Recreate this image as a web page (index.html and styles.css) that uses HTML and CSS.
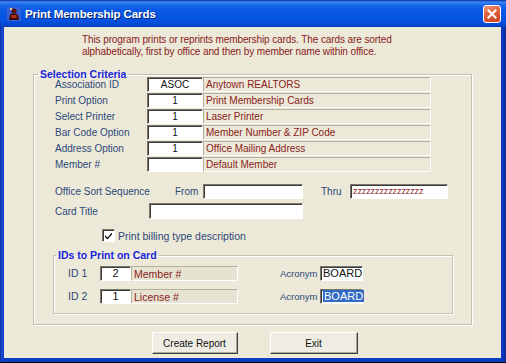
FILE: index.html
```html
<!DOCTYPE html>
<html>
<head>
<meta charset="utf-8">
<title>Print Membership Cards</title>
<link rel="stylesheet" href="styles.css">
</head>
<body>
<div class="window">
  <div class="titlebar">
    <svg class="app-icon" width="14" height="14" viewBox="0 0 14 14">
      <rect x="0" y="0" width="14" height="14" fill="#3A5FD0"/>
      <circle cx="7" cy="4" r="2.6" fill="#5A1010"/>
      <path d="M2 13 L3 7.5 Q7 5.5 11 7.5 L12 13 Z" fill="#3A0A0A"/>
      <path d="M4 8 L10 8 L9.5 11 L4.5 11 Z" fill="#B02A1A"/>
      <rect x="3" y="1" width="2" height="2" fill="#E8D0A0"/>
    </svg>
    <span class="title">Print Membership Cards</span>
    <span class="close">
      <svg width="10" height="10" viewBox="0 0 10 10"><path d="M1.5 1.5 L8.5 8.5 M8.5 1.5 L1.5 8.5" stroke="#fff" stroke-width="2" stroke-linecap="square"/></svg>
    </span>
  </div>
  <div class="client">
    <p class="intro">This program prints or reprints membership cards. The cards are sorted<br>alphabetically, first by office and then by member name within office.</p>
    <fieldset class="group main">
      <legend>Selection Criteria</legend>
      <div class="inner">
        <div class="criteria">
          <div class="row"><span class="lbl">Association ID</span><span class="tb num">ASOC</span><span class="desc">Anytown REALTORS</span></div>
          <div class="row"><span class="lbl">Print Option</span><span class="tb num">1</span><span class="desc">Print Membership Cards</span></div>
          <div class="row"><span class="lbl">Select Printer</span><span class="tb num">1</span><span class="desc">Laser Printer</span></div>
          <div class="row"><span class="lbl">Bar Code Option</span><span class="tb num">1</span><span class="desc">Member Number &amp; ZIP Code</span></div>
          <div class="row"><span class="lbl">Address Option</span><span class="tb num">1</span><span class="desc">Office Mailing Address</span></div>
          <div class="row"><span class="lbl">Member #</span><span class="tb num"></span><span class="desc">Default Member</span></div>
        </div>
        <div class="sort-row">
          <span class="sort-lbl">Office Sort Sequence</span>
          <span class="from-lbl">From</span>
          <span class="tb from"></span>
          <span class="thru-lbl">Thru</span>
          <span class="tb thru">zzzzzzzzzzzzzzzz</span>
        </div>
        <div class="title-row">
          <span class="card-lbl">Card Title</span>
          <span class="tb card"></span>
        </div>
        <div class="check-row">
          <span class="checkbox">
            <svg width="9" height="9" viewBox="0 0 9 9"><path d="M1 4 L3.5 6.5 L8 1.5 L8 3.5 L3.5 8.5 L1 6 Z" fill="#111"/></svg>
          </span>
          <span class="check-lbl">Print billing type description</span>
        </div>
        <fieldset class="group ids">
          <legend>IDs to Print on Card</legend>
          <div class="ids-inner">
            <div class="id-row">
              <span class="id-lbl">ID 1</span>
              <span class="tb idnum">2</span>
              <span class="desc id-desc">Member #</span>
              <span class="acr-lbl">Acronym</span>
              <span class="tb acr">BOARD</span>
            </div>
            <div class="id-row">
              <span class="id-lbl">ID 2</span>
              <span class="tb idnum">1</span>
              <span class="desc id-desc">License #</span>
              <span class="acr-lbl">Acronym</span>
              <span class="tb acr"><span class="sel">BOARD</span></span>
            </div>
          </div>
        </fieldset>
      </div>
    </fieldset>
    <div class="buttons">
      <button class="btn create">Create Report</button>
      <button class="btn exit">Exit</button>
    </div>
  </div>
</div>
</body>
</html>
```

FILE: styles.css
```css
* { box-sizing: border-box; }

html, body {
  margin: 0;
  padding: 0;
  width: 506px;
  height: 363px;
  overflow: hidden;
  background: #0b1a55;
}

body {
  font-family: "Liberation Sans", Arial, sans-serif;
  font-size: 10px;
  color: #2c4878;
}

.window {
  display: flex;
  flex-direction: column;
  width: 506px;
  height: 363px;
  background: linear-gradient(90deg, #0a2a9a 0, #1a4ad8 2px, #0c3cc4 4px, #0c3cc4 501px, #0838c0 503px, #0a2a90 506px);
  border-bottom: 1px solid #000;
}

.titlebar {
  height: 27px;
  flex: none;
  display: flex;
  align-items: center;
  padding: 0 5px 0 7px;
  background: linear-gradient(180deg, #0a2f9e 0, #3d86f5 2px, #1767ea 5px, #0858e4 10px, #0654e2 20px, #0648cf 25px, #0a3fb8 27px);
}

.app-icon {
  flex: none;
  margin-right: 4px;
}

.title {
  flex: 1;
  color: #fff;
  font-family: "Liberation Sans", Arial, sans-serif;
  font-weight: bold;
  font-size: 11.5px;
  letter-spacing: -0.1px;
  text-shadow: 1px 1px 0 #0a2470;
}

.close {
  flex: none;
  width: 18px;
  height: 18px;
  display: flex;
  align-items: center;
  justify-content: center;
  border: 1px solid #fff;
  border-radius: 3px;
  background: linear-gradient(160deg, #f29a78 0, #e26440 40%, #cc4420 100%);
}

.client {
  flex: 1;
  margin: 0 5px 4px 4px;
  background: #ece9d8;
  padding-top: 7px;
}

.intro {
  margin: 0 0 0 78px;
  color: #8a2020;
  font-size: 10px;
  line-height: 12px;
  letter-spacing: -0.1px;
}

.group {
  margin: 0;
  border: 1px solid #c3c0b0;
  box-shadow: inset 1px 1px 0 #fff, 1px 1px 0 #fff;
  min-inline-size: 0;
}

.group > legend {
  color: #1a24d8;
  font-weight: bold;
  font-size: 10.5px;
  line-height: 11px;
  padding: 0 2px;
}

.main {
  margin: 11px 0 0 29px;
  width: 439px;
  padding: 0 0 10px 4px;
}

.inner {
  padding-left: 17px;
}

.criteria {
  margin-top: -3px;
  display: flex;
  flex-direction: column;
}

.row {
  display: flex;
  height: 16px;
  align-items: flex-start;
}

.lbl {
  width: 92px;
  line-height: 15px;
}

.tb {
  background: #fff;
  border: 1px solid;
  border-color: #7a7868 #fff #fff #7a7868;
  box-shadow: inset 1px 1px 0 #3a3a3a;
  color: #111;
  height: 15px;
  line-height: 13px;
  font-size: 10px;
}

.num {
  width: 56px;
  text-align: center;
}

.desc {
  width: 228px;
  height: 15px;
  line-height: 14px;
  padding-left: 2px;
  color: #8a1c1c;
  border: 1px solid;
  border-color: #b3b09e #fff #fff #b3b09e;
}

.sort-row {
  display: flex;
  align-items: center;
  margin-top: 11px;
  height: 15px;
}

.sort-lbl { width: 120px; }
.from-lbl { width: 28px; }
.tb.from { width: 100px; }
.thru-lbl { width: 29px; margin-left: 18px; }

.tb.thru {
  width: 98px;
  color: #8a1c1c;
  font-size: 9px;
  padding-left: 2px;
  letter-spacing: -0.1px;
}

.title-row {
  display: flex;
  align-items: center;
  margin-top: 4px;
  height: 16px;
}

.card-lbl { width: 94px; }
.tb.card { width: 154px; height: 16px; }

.check-row {
  display: flex;
  align-items: center;
  margin: 10px 0 0 47px;
  height: 13px;
}

.checkbox {
  width: 13px;
  height: 13px;
  display: flex;
  align-items: center;
  justify-content: center;
  background: #fff;
  border: 1px solid;
  border-color: #7a7868 #fff #fff #7a7868;
  box-shadow: inset 1px 1px 0 #3a3a3a;
  margin-right: 3px;
}

.check-lbl {
  font-size: 10.5px;
}

.ids {
  margin: 8px 0 0 -2px;
  width: 400px;
  padding: 0 0 10px 2px;
}

.ids-inner {
  padding-left: 12px;
  padding-top: 5px;
  display: flex;
  flex-direction: column;
  gap: 9px;
}

.id-row {
  display: flex;
  align-items: center;
  height: 14px;
}

.id-lbl { width: 32px; font-size: 10.5px; }

.tb.idnum {
  width: 31px;
  text-align: center;
  font-size: 11px;
}

.id-desc {
  width: 107px;
  font-size: 10.5px;
  background: #e6e3d2;
}

.acr-lbl { width: 40px; margin-left: 42px; font-size: 9.5px; }

.tb.acr {
  width: 43px;
  padding-left: 2px;
  font-size: 11px;
  line-height: 13px;
}

.sel {
  background: #316ac5;
  color: #fff;
  padding: 0 1px;
}

.buttons {
  display: flex;
  justify-content: center;
  gap: 32px;
  margin-top: 7px;
  padding-left: 4px;
}

.btn {
  height: 22px;
  font-family: "Liberation Sans", Arial, sans-serif;
  font-size: 10px;
  color: #111;
  background: #efede3;
  border: 1px solid;
  border-color: #fff #404040 #404040 #fff;
  box-shadow: inset -1px -1px 0 #aca899;
  padding: 0;
}

.create { width: 86px; }
.exit { width: 88px; }
```
